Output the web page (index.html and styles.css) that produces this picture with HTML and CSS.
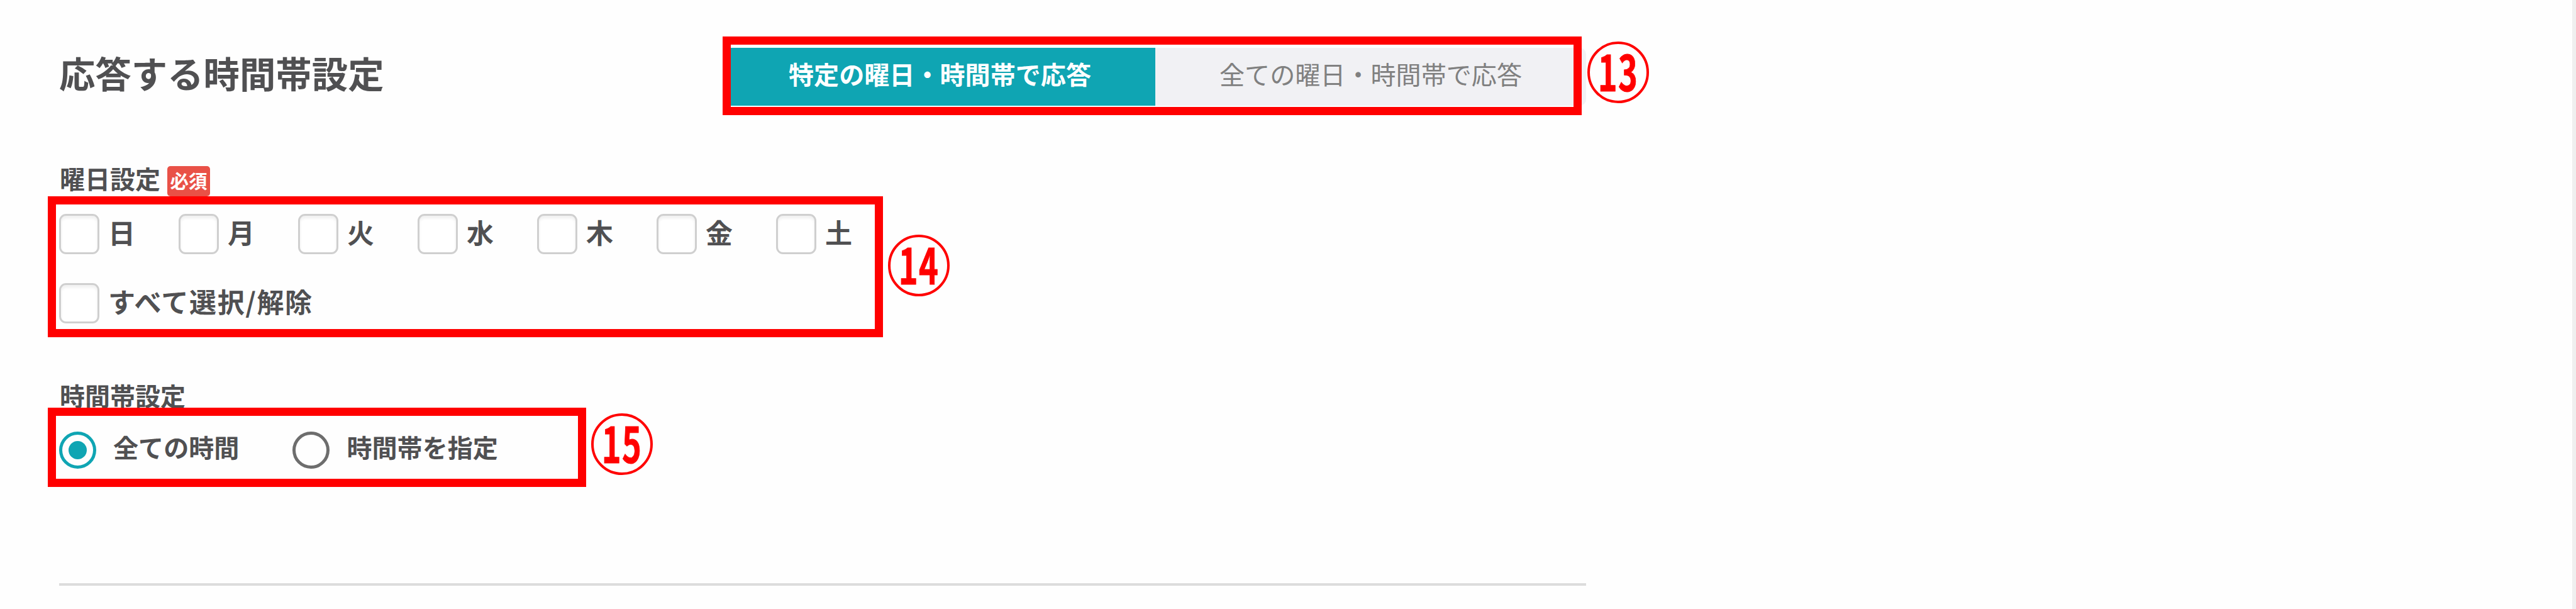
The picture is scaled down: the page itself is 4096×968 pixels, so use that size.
FILE: index.html
```html
<!DOCTYPE html>
<html lang="ja">
<head>
    <meta charset="UTF-8">
    <meta name="viewport" content="width=device-width, initial-scale=1.0">
    <title>応答する時間帯設定</title>
    <link rel="stylesheet" href="styles.css">
</head>
<body>
    <div class="page">
        <div class="panel">
            <div class="header">
                <h2 class="title">応答する時間帯設定</h2>
                <div class="toggle">
                    <div class="toggle-item active"><span>特定の曜日・時間帯で応答</span></div>
                    <div class="toggle-item"><span>全ての曜日・時間帯で応答</span></div>
                </div>
            </div>

            <div class="field-label">
                <span class="label-text">曜日設定</span>
                <span class="badge">必須</span>
            </div>
            <div class="checks">
                <label class="check"><i class="box"></i><span>日</span></label>
                <label class="check"><i class="box"></i><span>月</span></label>
                <label class="check"><i class="box"></i><span>火</span></label>
                <label class="check"><i class="box"></i><span>水</span></label>
                <label class="check"><i class="box"></i><span>木</span></label>
                <label class="check"><i class="box"></i><span>金</span></label>
                <label class="check"><i class="box"></i><span>土</span></label>
            </div>
            <div class="checks all">
                <label class="check"><i class="box"></i><span>すべて選択/解除</span></label>
            </div>

            <div class="field-label time">
                <span class="label-text">時間帯設定</span>
            </div>
            <div class="radios">
                <label class="radio"><i class="circle on"></i><span>全ての時間</span></label>
                <label class="radio"><i class="circle"></i><span>時間帯を指定</span></label>
            </div>
            <hr class="line">
        </div>

        <!-- callouts -->
        <div class="frame frame-13"></div>
        <div class="frame frame-14"></div>
        <div class="frame frame-15"></div>
        <div class="number number-13"><span>13</span></div>
        <div class="number number-14"><span>14</span></div>
        <div class="number number-15"><span>15</span></div>
    </div>
</body>
</html>
```
FILE: styles.css
```css
body {
    margin: 0;
    font-family: "Noto Sans CJK JP", sans-serif;
    font-weight: bold;
    color: #505052;
    background-color: #fefefe;
}

.page {
    position: relative;
    box-sizing: border-box;
    height: 968px;
    border-right: 6px solid #efefef;
    overflow: hidden;
}

.panel {
    width: 2428px;
    padding: 76px 0 0 94px;
}

.header {
    display: flex;
    align-items: center;
    justify-content: space-between;
    height: 92px;
}

.title {
    margin: 0;
    padding-bottom: 14px;
    font-size: 57.4px;
    line-height: 60px;
}

.toggle {
    display: flex;
    width: 1370px;
    height: 92px;
    border-radius: 10px;
    background-color: #f1f1f4;
    overflow: hidden;
}

.toggle-item {
    display: flex;
    flex: 1;
    align-items: center;
    justify-content: center;
    font-size: 40.1px;
    font-weight: normal;
    line-height: 44px;
    color: #808080;
}

.toggle-item span {
    padding-bottom: 11px;
}

.toggle-item.active {
    background-color: #0fa5b3;
    color: #fff;
    font-weight: bold;
}

.field-label {
    display: flex;
    align-items: center;
    height: 48px;
    margin-top: 96px;
    font-size: 40px;
    line-height: 40px;
}

.label-text {
    padding: 0 0 11px 1px;
}

.badge {
    width: 68px;
    height: 48px;
    margin-left: 11px;
    border-radius: 5px;
    background-color: #e95147;
    color: #fff;
    font-size: 29.5px;
    line-height: 45px;
    text-align: center;
}

.checks {
    display: flex;
    margin-top: 28px;
}

.checks.all {
    margin-top: 46px;
}

.check {
    display: flex;
    align-items: center;
    width: 190px;
    height: 64px;
    font-size: 43px;
    line-height: 48px;
    white-space: nowrap;
}

.check span {
    padding: 0 0 9px 14px;
}

.checks.all span {
    letter-spacing: 1.6px;
}

.box {
    flex: none;
    box-sizing: border-box;
    width: 64px;
    height: 64px;
    border: 3px solid #cfcfcf;
    border-radius: 11px;
    background-color: #fff;
    box-shadow: inset 0 4px 4px #f0f0f0;
}

.field-label.time {
    height: 40px;
    margin-top: 95px;
}

.field-label.time .label-text {
    padding-bottom: 3px;
}

.radios {
    display: flex;
    gap: 85px;
    margin-top: 36px;
}

.radio {
    display: flex;
    align-items: center;
    height: 60px;
    font-size: 40.1px;
    line-height: 44px;
}

.radio span {
    padding: 0 0 11px 27px;
}

.circle {
    display: flex;
    align-items: center;
    justify-content: center;
    box-sizing: border-box;
    width: 59px;
    height: 59px;
    border: 5px solid #6d6d6d;
    border-radius: 50%;
}

.circle.on {
    border-color: #0fa5b3;
}

.circle.on::after {
    content: "";
    width: 29px;
    height: 29px;
    border-radius: 50%;
    background-color: #0fa5b3;
}

.line {
    height: 4px;
    margin: 182px 0 0;
    border: none;
    background-color: #dcdcdc;
}

.frame {
    position: absolute;
    box-sizing: border-box;
    border: 13px solid #f00;
}

.frame-13 {
    left: 1149px;
    top: 58px;
    width: 1366px;
    height: 125px;
}

.frame-14 {
    left: 76px;
    top: 312px;
    width: 1328px;
    height: 224px;
}

.frame-15 {
    left: 76px;
    top: 648px;
    width: 856px;
    height: 126px;
}

.number {
    position: absolute;
    display: flex;
    align-items: center;
    justify-content: center;
    box-sizing: border-box;
    width: 98px;
    height: 98px;
    border: 4px solid #f00;
    border-radius: 50%;
    color: #f00;
    font-size: 78px;
    line-height: 90px;
}

.number span {
    padding-bottom: 9px;
    letter-spacing: 2px;
    transform: scaleX(0.67);
    -webkit-text-stroke: 1px #f00;
}

.number-13 {
    left: 2524px;
    top: 66px;
}

.number-14 {
    left: 1412px;
    top: 373px;
}

.number-15 {
    left: 940px;
    top: 657px;
}
```
